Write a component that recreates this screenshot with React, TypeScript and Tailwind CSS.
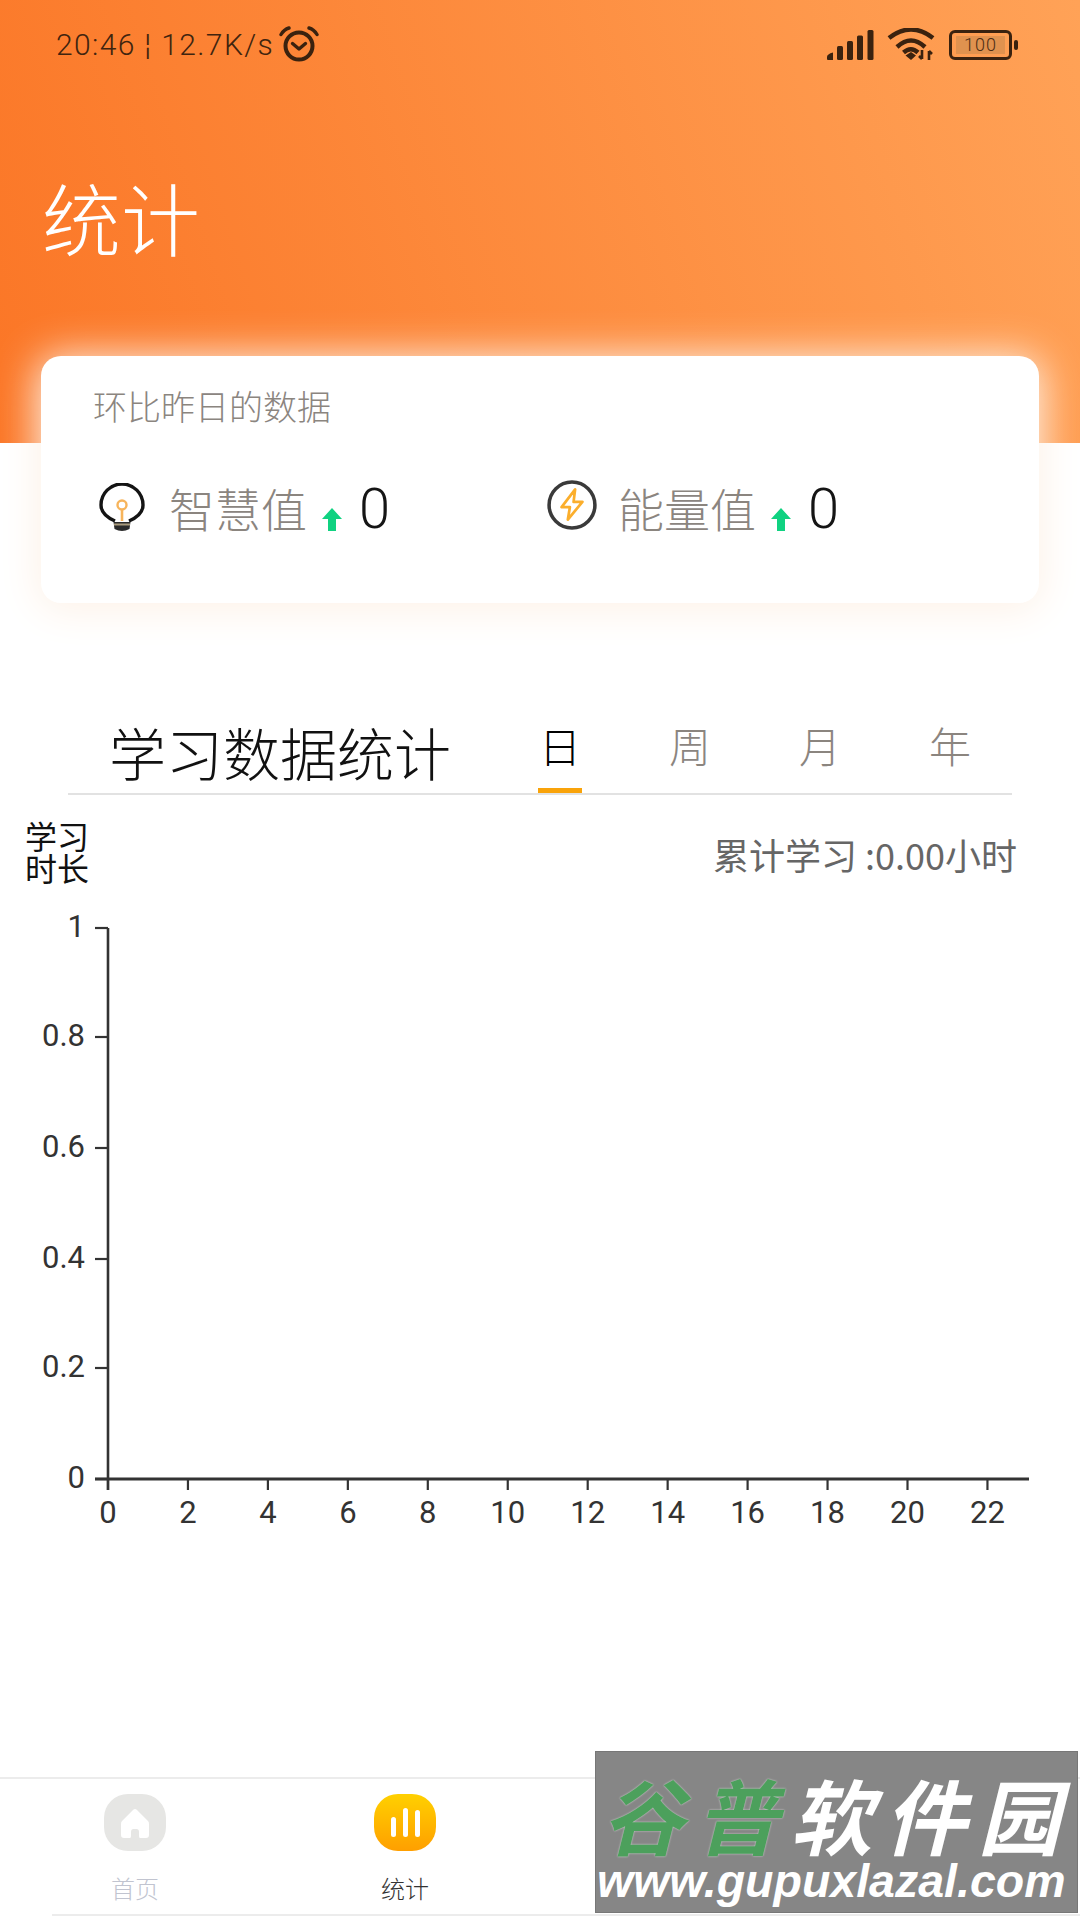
import React from "react";

const cjk = { fontFamily: '"Noto Sans CJK SC", "Noto Sans", sans-serif', fontWeight: 300 };

function Alarm() {
  return (
    <svg width="40" height="36" viewBox="0 0 40 36" fill="none" stroke="#3a220f">
      <circle cx="20" cy="20" r="13.5" strokeWidth="4" />
      <path d="M13.5 17.5 L20 23 L26.5 17.5" strokeWidth="3.4" strokeLinecap="round" strokeLinejoin="round" />
      <path d="M2 8.5 Q5 3.5 10 2" strokeWidth="3.4" strokeLinecap="round" />
      <path d="M38 8.5 Q35 3.5 30 2" strokeWidth="3.4" strokeLinecap="round" />
    </svg>
  );
}

function Signal() {
  return (
    <svg width="50" height="32" viewBox="0 0 50 32" fill="#3a220f">
      <path d="M1 28 Q1 25 7 23.5 L7 31 L2 31 Q1 31 1 30 Z" />
      <rect x="11" y="17" width="6" height="14" rx="1.5" />
      <rect x="21" y="12" width="6" height="19" rx="1.5" />
      <rect x="31" y="6.5" width="6" height="24.5" rx="1.5" />
      <rect x="41.5" y="1" width="6" height="30" rx="1.5" />
    </svg>
  );
}

function Wifi() {
  return (
    <svg width="50" height="34" viewBox="0 0 50 34" fill="none" stroke="#3a220f" strokeWidth="4.5">
      <path d="M2 10 Q24 -7 46 10" />
      <path d="M10 19 Q24 6 38 19" />
      <path d="M16.5 24.5 Q24 18 31 24.5" />
      <path d="M18.5 27.5 L24 24 L29 27.5 L24 32 Z" fill="#3a220f" strokeWidth="0" />
      <path d="M35 22 V31 M32 28 L35 31 M42 32 V23 M42 23 L45 26" strokeWidth="2.6" />
    </svg>
  );
}

function Battery() {
  return (
    <div className="flex items-center">
      <div className="flex h-[30px] w-[63px] items-center justify-center rounded-[6px] border-[3px] border-[#3a220f]">
        <div
          className="flex h-[18px] w-[49px] items-center justify-center bg-[#e0924f] text-[18px] leading-none tracking-[1px] text-[#4b2c14]"
          style={{ fontFamily: "Roboto, sans-serif", fontWeight: 300 }}
        >
          100
        </div>
      </div>
      <div className="ml-[2px] h-[10px] w-[4px] rounded-[2px] bg-[#3a220f]" />
    </div>
  );
}

function Bulb() {
  return (
    <svg width="48" height="52" viewBox="0 0 48 52" fill="none" className="block">
      <path d="M17 38 Q3 32 3 22 A21 21 0 0 1 45 22 Q45 32 31 38" stroke="#141414" strokeWidth="3.4" />
      <circle cx="24" cy="22" r="4.5" stroke="#f7b45b" strokeWidth="2.4" />
      <path d="M24 27 V38" stroke="#f7b45b" strokeWidth="2.6" />
      <path d="M15.5 39 H32.5 L31.5 46 Q24 50 16.5 46 Z" fill="#2b2b2b" />
      <path d="M16 41.5 H32" stroke="#a99a7c" strokeWidth="2" />
    </svg>
  );
}

function Bolt() {
  return (
    <svg width="50" height="50" viewBox="0 0 48 48" fill="none" className="block">
      <circle cx="24" cy="24" r="22" stroke="#3a3a3a" strokeWidth="3.4" />
      <path d="M27 9 L14 26 H22 L20 38 L34 21 H25.5 Z" stroke="#fbae2c" strokeWidth="2.6" strokeLinejoin="round" />
    </svg>
  );
}

function UpArrow() {
  return (
    <svg width="20" height="23" viewBox="0 0 20 23" fill="#10d281" className="block">
      <path d="M10 0 L20 11 H14 V23 H6 V11 H0 Z" />
    </svg>
  );
}

function Metric({ icon, label, iconClass }: { icon: React.ReactNode; label: string; iconClass: string }) {
  return (
    <div className="flex items-start">
      <div className={iconClass}>{icon}</div>
      <span className="mt-[22px] text-[46px] leading-none text-[#8b857f]">{label}</span>
      <div className="ml-[15px] mt-[46px]">
        <UpArrow />
      </div>
      <span className="ml-[17px] mt-[19px] text-[56px] leading-none text-[#151515]" style={{ fontFamily: "Roboto, sans-serif", fontWeight: 300 }}>
        0
      </span>
    </div>
  );
}

function Chart() {
  const ys = [
    ["1", 928],
    ["0.8", 1037],
    ["0.6", 1148],
    ["0.4", 1259],
    ["0.2", 1368],
    ["0", 1479],
  ] as const;
  const xs = Array.from({ length: 12 }, (_, i) => i * 2);
  const top = 905;
  return (
    <svg width="1080" height="640" viewBox={`0 ${top} 1080 640`} className="block">
      <path d="M108 928 V1490" stroke="#333" strokeWidth="2.6" fill="none" />
      <path d="M95 1479 H1029" stroke="#333" strokeWidth="3" fill="none" />
      {ys.map(([l, y]) => (
        <g key={l}>
          <path d={`M95 ${y} H108`} stroke="#333" strokeWidth="2.2" />
          <text x="85" y={y + 9} textAnchor="end" fontSize="31" fontWeight="400" fill="#333" fontFamily="Roboto, sans-serif">
            {l}
          </text>
        </g>
      ))}
      {xs.map((v, i) => {
        const x = 108 + i * 79.95;
        return (
          <g key={v}>
            <path d={`M${x} 1479 V1490`} stroke="#333" strokeWidth="2.2" />
            <text x={x} y="1523" textAnchor="middle" fontSize="31" fontWeight="400" fill="#333" fontFamily="Roboto, sans-serif">
              {v}
            </text>
          </g>
        );
      })}
    </svg>
  );
}

function Squircle({ children, gradient }: { children: React.ReactNode; gradient: boolean }) {
  return (
    <div
      className={`flex h-[57px] w-[62px] items-center justify-center rounded-[24px] ${
        gradient ? "bg-gradient-to-b from-[#ffd000] to-[#ff9f00]" : "bg-[#e6e6e4]"
      }`}
    >
      {children}
    </div>
  );
}

export default function App() {
  return (
    <div className="relative flex h-[1920px] w-[1080px] flex-col overflow-hidden bg-white" style={cjk}>
      <header className="h-[443px] shrink-0 bg-[linear-gradient(72deg,#fb7626,#ffa257)]">
        <div className="flex h-[90px] items-center justify-between pl-[56px] pr-[62px]">
          <div className="flex items-center">
            <span className="text-[30px] leading-none tracking-[1.4px] text-[#40240f]" style={{ fontFamily: "Roboto, sans-serif", fontWeight: 300 }}>
              20:46 ¦ 12.7K/s
            </span>
            <div className="ml-[5px] -mt-[2px]">
              <Alarm />
            </div>
          </div>
          <div className="flex items-center gap-[11px]">
            <Signal />
            <Wifi />
            <div className="ml-[1px]">
              <Battery />
            </div>
          </div>
        </div>
        <h1 className="ml-[42px] mt-[79px] text-[79px] font-light leading-[96px] text-white">统计</h1>
      </header>

      <section className="relative z-10 mx-[41px] -mt-[87px] h-[247px] shrink-0 rounded-[20px] bg-white pl-[52px] pr-[53px] pt-[30px] shadow-[0_4px_40px_4px_#fdf2e8]">
        <p className="text-[34px] leading-[40px] text-[#8b857f]">环比昨日的数据</p>
        <div className="mt-[36px] grid grid-cols-[454px_1fr]">
          <Metric icon={<Bulb />} label="智慧值" iconClass="ml-[5px] mr-[23px] mt-[21px]" />
          <Metric icon={<Bolt />} label="能量值" iconClass="mr-[21px] mt-[18px]" />
        </div>
      </section>

      <div className="mx-[68px] mt-[115px] flex h-[77px] shrink-0 items-start border-b-2 border-[#e2e2e2]">
        <h2 className="ml-[41px] -mt-[3px] w-[386px] shrink-0 text-[57px] font-light leading-[72px] text-[#111]">学习数据统计</h2>
        <nav className="flex shrink-0">
          {["日", "周", "月", "年"].map((t, i) => (
            <div key={t} className="relative flex h-[75px] w-[130px] justify-center">
              <span className={`pt-[1px] text-[42px] leading-[52px] ${i === 0 ? "text-black" : "text-[#8b857f]"}`}>{t}</span>
              {i === 0 && <div className="absolute bottom-0 left-[43px] h-[5px] w-[44px] bg-[#f9a30a]" />}
            </div>
          ))}
        </nav>
      </div>

      <div className="flex h-[110px] shrink-0 items-start justify-between pl-[25px] pr-[63px]">
        <div className="mt-[24px] text-[32px] font-normal leading-[32px] text-[#111]">
          学习
          <br />
          时长
        </div>
        <div className="mt-[37px] text-[36px] font-normal leading-[44px] text-[#666]">累计学习 :0.00小时</div>
      </div>

      <Chart />

      <nav className="absolute left-0 right-0 top-[1777px] h-[141px] border-t-2 border-[#ececec]">
        <div className="grid h-[135px] grid-cols-4">
          {[
            {
              label: "首页",
              color: "text-[#c1c4d0]",
              icon: (
                <Squircle gradient={false}>
                  <svg width="28" height="30" viewBox="0 0 28 30" fill="#fff">
                    <path d="M14 1 Q15 1 16 2 L27 13 Q28 14 28 16 V27 Q28 30 25 30 H19 Q18 30 18 28 V24 Q18 21 15.5 21 H12.5 Q10 21 10 24 V28 Q10 30 9 30 H3 Q0 30 0 27 V16 Q0 14 1 13 L12 2 Q13 1 14 1 Z" />
                  </svg>
                </Squircle>
              ),
            },
            {
              label: "统计",
              color: "text-[#333]",
              icon: (
                <Squircle gradient={true}>
                  <div className="flex items-end gap-[7px]">
                    <div className="h-[20px] w-[5px] rounded-full bg-white" />
                    <div className="h-[29px] w-[5px] rounded-full bg-white" />
                    <div className="h-[27px] w-[5px] rounded-full bg-white" />
                  </div>
                </Squircle>
              ),
            },
          ].map((item) => (
            <div key={item.label} className="flex flex-col items-center pt-[15px]">
              {item.icon}
              <span className={`mt-[21px] text-[24px] leading-[32px] ${item.color}`}>{item.label}</span>
            </div>
          ))}
        </div>
        <div className="ml-[52px] h-[2px] bg-[#ececec]" />
      </nav>

      <aside className="absolute left-[595px] top-[1751px] z-20 flex h-[162px] w-[483px] flex-col overflow-hidden border border-[#777] bg-[#868686] pl-[6px]">
        <div className="mt-[20px] flex h-[84px] items-center text-[82px] font-bold italic leading-[84px] tracking-[12px]">
          <span className="text-[#4ca05c] [text-shadow:0_0_2px_#dddddd]">谷普</span>
          <span className="text-white">软件园</span>
        </div>
        <div className="-ml-[5px] whitespace-nowrap text-[46.5px] font-bold italic leading-[50px] text-white" style={{ fontFamily: '"Liberation Sans", sans-serif' }}>
          www.gupuxlazal.com
        </div>
      </aside>
    </div>
  );
}
